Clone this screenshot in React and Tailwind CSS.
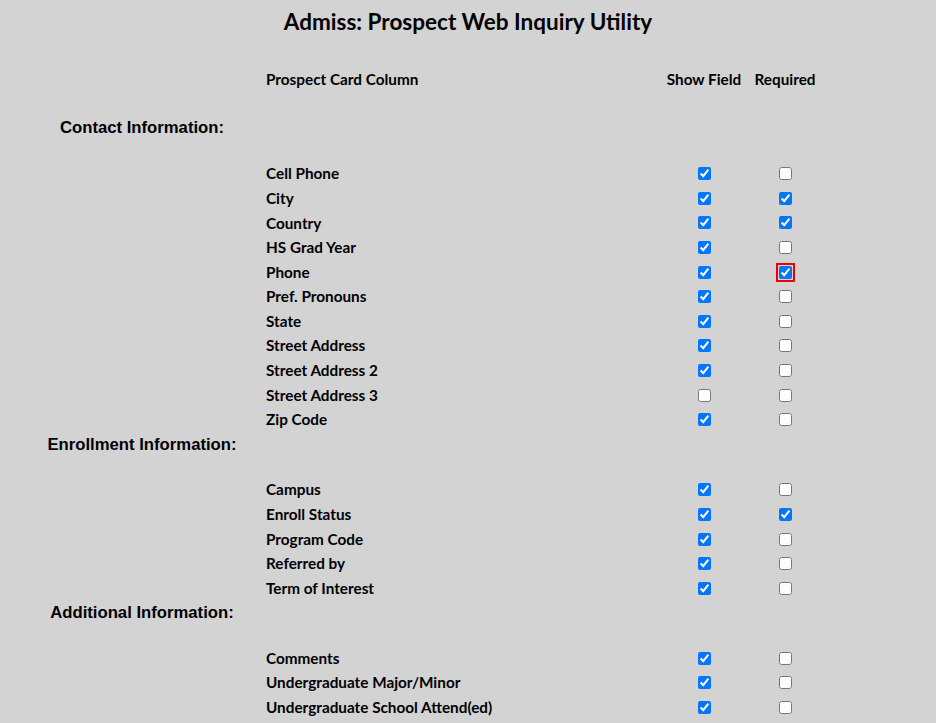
import React from 'react';

const sections = [
  {
    title: 'Contact Information:',
    rows: [
      { name: 'Cell Phone', show: true, req: false },
      { name: 'City', show: true, req: true },
      { name: 'Country', show: true, req: true },
      { name: 'HS Grad Year', show: true, req: false },
      { name: 'Phone', show: true, req: true, focus: true },
      { name: 'Pref. Pronouns', show: true, req: false },
      { name: 'State', show: true, req: false },
      { name: 'Street Address', show: true, req: false },
      { name: 'Street Address 2', show: true, req: false },
      { name: 'Street Address 3', show: false, req: false },
      { name: 'Zip Code', show: true, req: false },
    ],
  },
  {
    title: 'Enrollment Information:',
    rows: [
      { name: 'Campus', show: true, req: false },
      { name: 'Enroll Status', show: true, req: true },
      { name: 'Program Code', show: true, req: false },
      { name: 'Referred by', show: true, req: false },
      { name: 'Term of Interest', show: true, req: false },
    ],
  },
  {
    title: 'Additional Information:',
    rows: [
      { name: 'Comments', show: true, req: false },
      { name: 'Undergraduate Major/Minor', show: true, req: false },
      { name: 'Undergraduate School Attend(ed)', show: true, req: false },
    ],
  },
];

const labelFont = "font-['Lato','Open_Sans',sans-serif]";

const Box = ({ checked, focus }) => (
  <input
    type="checkbox"
    defaultChecked={checked}
    className={`m-0 h-[13px] w-[13px] accent-[#0075ff] ${
      focus ? 'outline-2 outline-offset-1 outline-[#ee0000]' : ''
    }`}
  />
);

const App = () => {
  return (
    <div className="min-h-[723px] w-[936px] bg-[#d3d3d3] text-black">
      <h1 className={`${labelFont} pt-[8px] text-center text-[22.5px] font-bold leading-[28px]`}>
        Admiss: Prospect Web Inquiry Utility
      </h1>

      {/* column headers */}
      <div className={`${labelFont} mt-[34px] flex h-[18px] items-center pl-[266px] text-[15.3px] font-bold`}>
        <div className="w-[398px]">Prospect Card Column</div>
        <div className="w-[80px] text-center">Show Field</div>
        <div className="w-[82px] text-center">Required</div>
      </div>

      {sections.map((s, i) => (
        <div key={s.title} className={i === 0 ? 'mt-[28px]' : ''}>
          <div className="flex h-[24px] w-[284px] items-center justify-center font-['Liberation_Sans',Arial,sans-serif] text-[16.7px] font-bold">
            {s.title}
          </div>
          <div className="h-[21.5px]" />
          {s.rows.map((r) => (
            <div
              key={r.name}
              className={`${labelFont} flex h-[24.6px] items-center pl-[266px] text-[15.3px] font-bold`}
            >
              <div className="w-[398px]">{r.name}</div>
              <div className="flex w-[80px] justify-center">
                <Box checked={r.show} />
              </div>
              <div className="flex w-[82px] justify-center">
                <Box checked={r.req} focus={r.focus} />
              </div>
            </div>
          ))}
        </div>
      ))}
    </div>
  );
};

export default App;
